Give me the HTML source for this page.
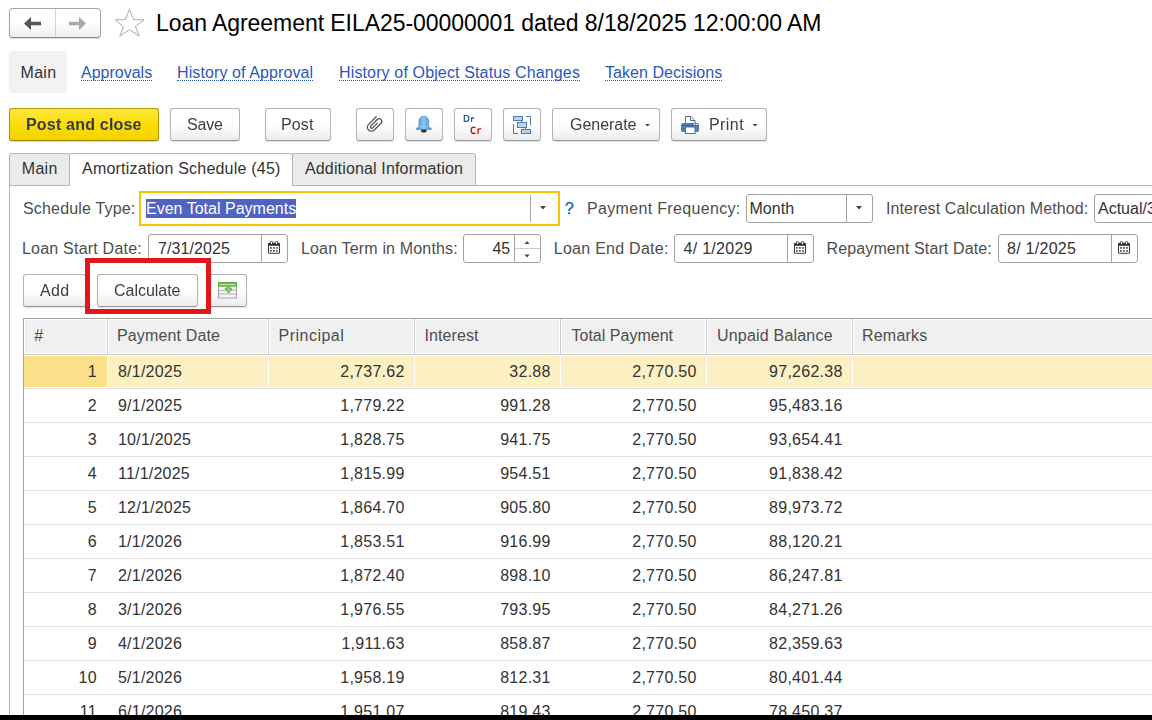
<!DOCTYPE html><html><head><meta charset="utf-8"><style>
*{box-sizing:border-box}
html,body{margin:0;padding:0;width:1152px;height:720px;overflow:hidden;background:#fff;position:relative;font-family:"Liberation Sans",sans-serif;color:#333}
.a{position:absolute}
.t16{position:absolute;font-size:16px;line-height:17px;white-space:nowrap}
.btn{position:absolute;height:33px;border:1px solid #b3b3b3;border-bottom-color:#999;border-radius:3px;background:linear-gradient(#fff 50%,#ececec);box-shadow:0 1px 1px rgba(0,0,0,.12)}
.btn .t16{color:#444}
.lnk{position:absolute;font-size:16px;line-height:17px;white-space:nowrap;color:#2a58bd;border-bottom:1px dotted #2a58bd}
.inp{position:absolute;height:29px;border:1px solid #a3a3a3;border-radius:3px;background:#fff}
.lbl{position:absolute;font-size:16px;line-height:17px;white-space:nowrap;color:#4d4d4d}
</style></head><body>
<div class="a" style="left:9px;top:8px;width:92px;height:30px;border:1px solid #a6a6a6;border-bottom-color:#8c8c8c;border-radius:4px;background:linear-gradient(#fff 40%,#f0f0f0);box-shadow:0 1px 1px rgba(0,0,0,.15)"></div>
<div class="a" style="left:55px;top:9px;width:1px;height:28px;background:#d4d4d4"></div>
<svg class="a" style="left:0;top:0" width="110" height="45"><path d="M24 23.5 L31 17 V21.8 H41 V25.2 H31 V30 Z" fill="#555"/><path d="M86 23.5 L79 17 V21.8 H69 V25.2 H79 V30 Z" fill="#a8a8a8"/></svg>
<svg class="a" style="left:0;top:0" width="160" height="45"><path d="M129.4 9.4 L133.7 19.6 L143.9 19.9 L135.4 26.5 L139.3 36.1 L129.4 29.7 L119.8 36.1 L123.5 26.5 L115.1 19.9 L125.2 19.6 Z" fill="none" stroke="#a3acb7" stroke-width="1" stroke-linejoin="miter"/></svg>
<div class="t16" style="left:156.00px;top:10px;letter-spacing:-0.058px;color:#000;font-size:23px;line-height:26px">Loan Agreement EILA25-00000001 dated 8/18/2025 12:00:00 AM</div>
<div class="a" style="left:9px;top:51px;width:58px;height:42px;background:#f2f2f2;border-radius:4px"></div>
<div class="t16" style="left:20.50px;top:64px;letter-spacing:0.300px;color:#333;">Main</div>
<div class="lnk" style="left:81px;top:64px;height:17px;letter-spacing:0px">Approvals</div>
<div class="lnk" style="left:177px;top:64px;height:17px;letter-spacing:0.1px">History of Approval</div>
<div class="lnk" style="left:339px;top:64px;height:17px;letter-spacing:0.14px">History of Object Status Changes</div>
<div class="lnk" style="left:605px;top:64px;height:17px;letter-spacing:0.05px">Taken Decisions</div>
<div class="a" style="left:9px;top:108px;width:150px;height:33px;border:1px solid #b09a00;border-bottom-color:#9c8600;border-radius:3px;background:linear-gradient(#ffe640,#fbdc00 55%,#f2d300);box-shadow:0 1px 1px rgba(0,0,0,.15)"></div>
<div class="t16" style="left:26.00px;top:116px;letter-spacing:0.200px;color:#353a4c;font-weight:bold;will-change:transform">Post and close</div>
<div class="btn" style="left:170px;top:108px;width:70px"></div>
<div class="t16" style="left:187.00px;top:116px;letter-spacing:-0.200px;color:#3d3d3d;will-change:transform">Save</div>
<div class="btn" style="left:265px;top:108px;width:66px"></div>
<div class="t16" style="left:281.00px;top:116px;letter-spacing:0.133px;color:#3d3d3d;will-change:transform">Post</div>
<div class="btn" style="left:356px;top:108px;width:38px"></div>
<div class="btn" style="left:405px;top:108px;width:38px"></div>
<div class="btn" style="left:454px;top:108px;width:38px"></div>
<div class="btn" style="left:503px;top:108px;width:38px"></div>
<svg class="a" style="left:356px;top:108px" width="38" height="33"><g transform="matrix(0.7071,-0.7071,0.7071,0.7071,8,5)"><path d="M6.6 11.3 L-4.8 11.3 A4 4 0 0 0 -4.8 19.3 L4.7 19.3 A2.65 2.65 0 0 0 4.7 14 L-4.4 14 A1.3 1.3 0 0 0 -4.4 16.6 L2.6 16.6" fill="none" stroke="#555" stroke-width="1.3"/></g></svg>
<svg class="a" style="left:405px;top:108px" width="38" height="33"><defs><linearGradient id="bg" x1="0" x2="1"><stop offset="0" stop-color="#3f8fd0"/><stop offset=".5" stop-color="#86c8f4"/><stop offset="1" stop-color="#3f8fd0"/></linearGradient></defs><ellipse cx="18.8" cy="22.2" rx="2.8" ry="2.3" fill="#2e2e2e"/><path d="M13.9 18 V13 A4.9 4.9 0 0 1 23.7 13 V18 Q23.9 19.6 26.4 20.4 V21.5 H11.2 V20.4 Q13.7 19.6 13.9 18 Z" fill="url(#bg)" stroke="#3d7fb8" stroke-width=".5"/><rect x="13.6" y="17.8" width="10.4" height="1" fill="#9ad2f6" opacity=".7"/></svg>
<svg class="a" style="left:454px;top:108px" width="38" height="33"><g fill="none" stroke="#1f5b9a" stroke-width="1.2"><path d="M10.3 7.5 V13.3 H12 C14.2 13.3 14.9 11.8 14.9 10.4 C14.9 9 14.2 7.5 12 7.5 Z"/><path d="M17.6 9.3 V13.9 M17.6 10.9 C17.8 10.1 18.6 9.8 20.1 9.9"/></g><g fill="none" stroke="#c81400" stroke-width="1.3"><path d="M21.4 19.9 C20.9 19.2 20.3 19.2 19.6 19.2 C17.8 19.2 17.2 20.8 17.2 22.4 C17.2 24 17.8 25.5 19.6 25.5 C20.3 25.5 20.9 25.3 21.4 24.8"/><path d="M24.1 20.6 V26.1 M24.1 21.8 C24.3 20.9 25.3 20.5 27 20.6"/></g></svg>
<svg class="a" style="left:503px;top:108px" width="38" height="33"><g stroke="#4a7fb0" stroke-width="1" fill="#bcd4ea"><rect x="10.5" y="8.5" width="9" height="4"/><rect x="14.5" y="14.5" width="9" height="5"/><rect x="18.5" y="21.5" width="9" height="4"/></g><g stroke="#4a7fb0" stroke-width="1" fill="none"><path d="M18.5 12.5 V14.5 M22.5 19.5 V21.5 M23 8.5 H27.5 V17.5 M10.5 16 V25.5 H15"/></g></svg>
<div class="btn" style="left:552px;top:108px;width:108px"></div>
<div class="t16" style="left:569.50px;top:116px;letter-spacing:-0.029px;color:#3d3d3d;will-change:transform">Generate</div>
<svg class="a" style="left:640px;top:120px" width="14" height="10"><path d="M5 4 H10 L7.5 6.5 Z" fill="#444"/></svg>
<div class="btn" style="left:671px;top:108px;width:96px"></div>
<div class="t16" style="left:709.00px;top:116px;letter-spacing:0.425px;color:#3d3d3d;will-change:transform">Print</div>
<svg class="a" style="left:747px;top:120px" width="14" height="10"><path d="M5.5 4 H10.5 L8 6.5 Z" fill="#444"/></svg>
<svg class="a" style="left:671px;top:108px" width="38" height="33"><path d="M14.5 15.5 V8.5 H20 L24 12.5 V15.5" fill="#fff" stroke="#4f6f95" stroke-width="1"/><path d="M19.5 8.5 V12.5 H24" fill="#e8eef5" stroke="#4f6f95" stroke-width="1"/><rect x="10" y="15" width="18" height="9" rx="2" fill="#557ead"/><rect x="11" y="17" width="16" height="1" fill="#3f628c"/><circle cx="23.5" cy="16.5" r=".8" fill="#fff"/><circle cx="25.6" cy="16.5" r=".8" fill="#fff"/><rect x="14.5" y="19" width="9.5" height="6.5" fill="#fff" stroke="#4f6f95" stroke-width="1"/></svg>
<div class="a" style="left:9px;top:185px;width:1143px;height:1px;background:#b5b5b5"></div>
<div class="a" style="left:9px;top:153px;width:61px;height:33px;border:1px solid #b5b5b5;border-radius:3px 3px 0 0;background:#ebebeb"></div>
<div class="t16" style="left:21.80px;top:160px;letter-spacing:0.300px;color:#333;">Main</div>
<div class="a" style="left:69px;top:153px;width:224px;height:33px;border:1px solid #b5b5b5;border-bottom:none;border-radius:3px 3px 0 0;background:#fff"></div>
<div class="t16" style="left:82.00px;top:160px;letter-spacing:0.216px;color:#333;">Amortization Schedule (45)</div>
<div class="a" style="left:292px;top:153px;width:184px;height:33px;border:1px solid #b5b5b5;border-radius:3px 3px 0 0;background:#ebebeb"></div>
<div class="t16" style="left:305.00px;top:160px;letter-spacing:0.148px;color:#333;">Additional Information</div>
<div class="a" style="left:9px;top:185px;width:1px;height:535px;background:#b5b5b5"></div>
<div class="t16" style="left:23.00px;top:200px;letter-spacing:0.177px;color:#4d4d4d;">Schedule Type:</div>
<div class="a" style="left:139px;top:191px;width:421px;height:35px;border:2px solid #f7c600;background:#fff"></div>
<div class="a" style="left:146px;top:199px;width:150px;height:19px;background:#5063c2"></div>
<div class="t16" style="left:146.00px;top:200px;letter-spacing:0.011px;color:#fff;">Even Total Payments</div>
<div class="a" style="left:530px;top:195px;width:1px;height:27px;background:#a8a8a8"></div>
<svg class="a" style="left:530px;top:195px" width="28" height="28"><path d="M10 11 H16 L13 14.5 Z" fill="#444"/></svg>
<div class="t16" style="left:564.60px;top:200px;letter-spacing:0.000px;color:#1a6fc2;-webkit-text-stroke:0.45px #1a6fc2;will-change:transform">?</div>
<div class="t16" style="left:587.00px;top:200px;letter-spacing:0.335px;color:#4d4d4d;">Payment Frequency:</div>
<div class="inp" style="left:746px;top:194px;width:127px;height:29px"></div>
<div class="t16" style="left:749.50px;top:200px;letter-spacing:0.025px;color:#333;">Month</div>
<div class="a" style="left:846px;top:195px;width:1px;height:27px;background:#a3a3a3"></div>
<svg class="a" style="left:847px;top:195px" width="25" height="27"><path d="M9 11 H15 L12 14.5 Z" fill="#444"/></svg>
<div class="t16" style="left:886.00px;top:200px;letter-spacing:0.111px;color:#4d4d4d;">Interest Calculation Method:</div>
<div class="inp" style="left:1094px;top:194px;width:80px;height:29px"></div>
<div class="t16" style="left:1098px;top:200px;color:#333">Actual/365</div>
<div class="t16" style="left:22.00px;top:240px;letter-spacing:0.213px;color:#4d4d4d;">Loan Start Date:</div>
<div class="inp" style="left:148px;top:234px;width:140px;height:29px"></div><div class="t16" style="left:158.00px;top:240px;letter-spacing:0.075px;color:#333;">7/31/2025</div><div class="a" style="left:261px;top:235px;width:1px;height:27px;background:#a3a3a3"></div><svg class="a" style="left:261px;top:234px" width="27" height="29"><rect x="7" y="8.8" width="12" height="11" rx="1.4" fill="#333"/><rect x="8" y="11.8" width="10" height="7" fill="#fff"/><g fill="#333"><rect x="9.1" y="13.1" width="1.6" height="1.6"/><rect x="12.1" y="13.1" width="1.6" height="1.6"/><rect x="15.2" y="13.1" width="1.6" height="1.6"/><rect x="9.1" y="16.1" width="1.6" height="1.6"/><rect x="12.1" y="16.1" width="1.6" height="1.6"/><rect x="15.2" y="16.1" width="1.6" height="1.6"/></g><g fill="#333"><rect x="9.2" y="6.9" width="2.6" height="4" rx="1.3"/><rect x="14.2" y="6.9" width="2.6" height="4" rx="1.3"/></g><g fill="#fff"><rect x="9.9" y="7.6" width="1.2" height="2.6" rx=".6"/><rect x="14.9" y="7.6" width="1.2" height="2.6" rx=".6"/></g></svg>
<div class="t16" style="left:301.00px;top:240px;letter-spacing:0.163px;color:#4d4d4d;">Loan Term in Months:</div>
<div class="inp" style="left:463px;top:234px;width:78px;height:29px"></div>
<div class="t16" style="left:492.50px;top:240px;letter-spacing:-0.200px;color:#333;">45</div>
<div class="a" style="left:514px;top:235px;width:1px;height:27px;background:#a3a3a3"></div>
<div class="a" style="left:515px;top:248px;width:25px;height:1px;background:#c8c8c8"></div>
<svg class="a" style="left:515px;top:234px" width="25" height="29"><path d="M9.5 10 H14.5 L12 7 Z M9.5 20.5 H14.5 L12 23.5 Z" fill="#444"/></svg>
<div class="t16" style="left:553.80px;top:240px;letter-spacing:0.262px;color:#4d4d4d;">Loan End Date:</div>
<div class="inp" style="left:674px;top:234px;width:140px;height:29px"></div><div class="t16" style="left:683.50px;top:240px;letter-spacing:0.281px;color:#333;">4/ 1/2029</div><div class="a" style="left:787px;top:235px;width:1px;height:27px;background:#a3a3a3"></div><svg class="a" style="left:787px;top:234px" width="27" height="29"><rect x="7" y="8.8" width="12" height="11" rx="1.4" fill="#333"/><rect x="8" y="11.8" width="10" height="7" fill="#fff"/><g fill="#333"><rect x="9.1" y="13.1" width="1.6" height="1.6"/><rect x="12.1" y="13.1" width="1.6" height="1.6"/><rect x="15.2" y="13.1" width="1.6" height="1.6"/><rect x="9.1" y="16.1" width="1.6" height="1.6"/><rect x="12.1" y="16.1" width="1.6" height="1.6"/><rect x="15.2" y="16.1" width="1.6" height="1.6"/></g><g fill="#333"><rect x="9.2" y="6.9" width="2.6" height="4" rx="1.3"/><rect x="14.2" y="6.9" width="2.6" height="4" rx="1.3"/></g><g fill="#fff"><rect x="9.9" y="7.6" width="1.2" height="2.6" rx=".6"/><rect x="14.9" y="7.6" width="1.2" height="2.6" rx=".6"/></g></svg>
<div class="t16" style="left:826.50px;top:240px;letter-spacing:0.125px;color:#4d4d4d;">Repayment Start Date:</div>
<div class="inp" style="left:998px;top:234px;width:140px;height:29px"></div><div class="t16" style="left:1007.00px;top:240px;letter-spacing:0.275px;color:#333;">8/ 1/2025</div><div class="a" style="left:1111px;top:235px;width:1px;height:27px;background:#a3a3a3"></div><svg class="a" style="left:1111px;top:234px" width="27" height="29"><rect x="7" y="8.8" width="12" height="11" rx="1.4" fill="#333"/><rect x="8" y="11.8" width="10" height="7" fill="#fff"/><g fill="#333"><rect x="9.1" y="13.1" width="1.6" height="1.6"/><rect x="12.1" y="13.1" width="1.6" height="1.6"/><rect x="15.2" y="13.1" width="1.6" height="1.6"/><rect x="9.1" y="16.1" width="1.6" height="1.6"/><rect x="12.1" y="16.1" width="1.6" height="1.6"/><rect x="15.2" y="16.1" width="1.6" height="1.6"/></g><g fill="#333"><rect x="9.2" y="6.9" width="2.6" height="4" rx="1.3"/><rect x="14.2" y="6.9" width="2.6" height="4" rx="1.3"/></g><g fill="#fff"><rect x="9.9" y="7.6" width="1.2" height="2.6" rx=".6"/><rect x="14.9" y="7.6" width="1.2" height="2.6" rx=".6"/></g></svg>
<div class="btn" style="left:23px;top:274px;width:63px"></div>
<div class="t16" style="left:40.00px;top:282px;letter-spacing:0.300px;color:#3d3d3d;will-change:transform">Add</div>
<div class="btn" style="left:97px;top:274px;width:101px"></div>
<div class="t16" style="left:114.00px;top:282px;letter-spacing:-0.025px;color:#3d3d3d;will-change:transform">Calculate</div>
<div class="btn" style="left:209px;top:274px;width:38px"></div>
<svg class="a" style="left:209px;top:274px" width="38" height="33"><rect x="9.5" y="8.5" width="18" height="15.5" fill="#f4f4f4" stroke="#a3a3a3" stroke-width="1"/><path d="M10 16.3 H27 M10 20 H27" stroke="#b0b0b0" stroke-width="1"/><rect x="9" y="8" width="19" height="4.7" fill="#62a847"/><rect x="10.3" y="9.7" width="16.4" height="1.6" fill="#b3e59d"/><path d="M17.6 12.5 H21.4 V14.3 H23.7 L19.5 19.6 L15.3 14.3 H17.6 Z" fill="#62a847"/><path d="M18.8 12.5 H20.2 V15.2 H21.5 L19.5 17.7 L17.5 15.2 H18.8 Z" fill="#9fd68a"/></svg>
<div class="a" style="left:23px;top:318px;width:1140px;height:402px;border-left:1px solid #a3a3a3;border-top:1px solid #a3a3a3"></div>
<div class="a" style="left:24px;top:354px;width:1130px;height:1px;background:#cdcdcd"></div>
<div class="a" style="left:25px;top:320px;width:81px;height:33px;background:#f0f0f0"></div>
<div class="a" style="left:109px;top:320px;width:158px;height:33px;background:#f0f0f0"></div>
<div class="a" style="left:270px;top:320px;width:143px;height:33px;background:#f0f0f0"></div>
<div class="a" style="left:416px;top:320px;width:143px;height:33px;background:#f0f0f0"></div>
<div class="a" style="left:562px;top:320px;width:143px;height:33px;background:#f0f0f0"></div>
<div class="a" style="left:708px;top:320px;width:143px;height:33px;background:#f0f0f0"></div>
<div class="a" style="left:854px;top:320px;width:305px;height:33px;background:#f0f0f0"></div>
<div class="a" style="left:107px;top:319px;width:1px;height:36px;background:#cdcdcd"></div>
<div class="a" style="left:268px;top:319px;width:1px;height:36px;background:#cdcdcd"></div>
<div class="a" style="left:414px;top:319px;width:1px;height:36px;background:#cdcdcd"></div>
<div class="a" style="left:560px;top:319px;width:1px;height:36px;background:#cdcdcd"></div>
<div class="a" style="left:706px;top:319px;width:1px;height:36px;background:#cdcdcd"></div>
<div class="a" style="left:852px;top:319px;width:1px;height:36px;background:#cdcdcd"></div>
<div class="t16" style="left:34.20px;top:327px;letter-spacing:0.000px;color:#4d4d4d;">#</div>
<div class="t16" style="left:117.00px;top:327px;letter-spacing:0.145px;color:#4d4d4d;">Payment Date</div>
<div class="t16" style="left:278.50px;top:327px;letter-spacing:0.488px;color:#4d4d4d;">Principal</div>
<div class="t16" style="left:424.50px;top:327px;letter-spacing:0.079px;color:#4d4d4d;">Interest</div>
<div class="t16" style="left:571.50px;top:327px;letter-spacing:0.008px;color:#4d4d4d;">Total Payment</div>
<div class="t16" style="left:717.00px;top:327px;letter-spacing:0.200px;color:#4d4d4d;">Unpaid Balance</div>
<div class="t16" style="left:862.00px;top:327px;letter-spacing:0.200px;color:#4d4d4d;">Remarks</div>
<div class="a" style="left:24px;top:356px;width:83px;height:31px;background:#fbe08a"></div>
<div class="a" style="left:108px;top:356px;width:1050px;height:31px;background:#fdf1c4"></div>
<div class="a" style="left:268px;top:356px;width:1px;height:31px;background:#fff"></div>
<div class="a" style="left:414px;top:356px;width:1px;height:31px;background:#fff"></div>
<div class="a" style="left:560px;top:356px;width:1px;height:31px;background:#fff"></div>
<div class="a" style="left:706px;top:356px;width:1px;height:31px;background:#fff"></div>
<div class="a" style="left:852px;top:356px;width:1px;height:31px;background:#fff"></div>
<div class="a" style="left:24px;top:388px;width:1130px;height:1px;background:#e3e3e3"></div>
<div class="t16" style="left:24px;top:363px;width:72.7px;text-align:right;letter-spacing:0.15px">1</div>
<div class="t16" style="left:118px;top:363px;letter-spacing:0.22px">8/1/2025</div>
<div class="t16" style="left:268px;top:363px;width:136.7px;text-align:right;letter-spacing:0.27px">2,737.62</div>
<div class="t16" style="left:414px;top:363px;width:136.7px;text-align:right;letter-spacing:0.27px">32.88</div>
<div class="t16" style="left:560px;top:363px;width:136.7px;text-align:right;letter-spacing:0.27px">2,770.50</div>
<div class="t16" style="left:706px;top:363px;width:136.7px;text-align:right;letter-spacing:0.27px">97,262.38</div>
<div class="a" style="left:24px;top:422px;width:1130px;height:1px;background:#e3e3e3"></div>
<div class="t16" style="left:24px;top:397px;width:72.7px;text-align:right;letter-spacing:0.15px">2</div>
<div class="t16" style="left:118px;top:397px;letter-spacing:0.22px">9/1/2025</div>
<div class="t16" style="left:268px;top:397px;width:136.7px;text-align:right;letter-spacing:0.27px">1,779.22</div>
<div class="t16" style="left:414px;top:397px;width:136.7px;text-align:right;letter-spacing:0.27px">991.28</div>
<div class="t16" style="left:560px;top:397px;width:136.7px;text-align:right;letter-spacing:0.27px">2,770.50</div>
<div class="t16" style="left:706px;top:397px;width:136.7px;text-align:right;letter-spacing:0.27px">95,483.16</div>
<div class="a" style="left:24px;top:456px;width:1130px;height:1px;background:#e3e3e3"></div>
<div class="t16" style="left:24px;top:431px;width:72.7px;text-align:right;letter-spacing:0.15px">3</div>
<div class="t16" style="left:118px;top:431px;letter-spacing:0.22px">10/1/2025</div>
<div class="t16" style="left:268px;top:431px;width:136.7px;text-align:right;letter-spacing:0.27px">1,828.75</div>
<div class="t16" style="left:414px;top:431px;width:136.7px;text-align:right;letter-spacing:0.27px">941.75</div>
<div class="t16" style="left:560px;top:431px;width:136.7px;text-align:right;letter-spacing:0.27px">2,770.50</div>
<div class="t16" style="left:706px;top:431px;width:136.7px;text-align:right;letter-spacing:0.27px">93,654.41</div>
<div class="a" style="left:24px;top:490px;width:1130px;height:1px;background:#e3e3e3"></div>
<div class="t16" style="left:24px;top:465px;width:72.7px;text-align:right;letter-spacing:0.15px">4</div>
<div class="t16" style="left:118px;top:465px;letter-spacing:0.22px">11/1/2025</div>
<div class="t16" style="left:268px;top:465px;width:136.7px;text-align:right;letter-spacing:0.27px">1,815.99</div>
<div class="t16" style="left:414px;top:465px;width:136.7px;text-align:right;letter-spacing:0.27px">954.51</div>
<div class="t16" style="left:560px;top:465px;width:136.7px;text-align:right;letter-spacing:0.27px">2,770.50</div>
<div class="t16" style="left:706px;top:465px;width:136.7px;text-align:right;letter-spacing:0.27px">91,838.42</div>
<div class="a" style="left:24px;top:524px;width:1130px;height:1px;background:#e3e3e3"></div>
<div class="t16" style="left:24px;top:499px;width:72.7px;text-align:right;letter-spacing:0.15px">5</div>
<div class="t16" style="left:118px;top:499px;letter-spacing:0.22px">12/1/2025</div>
<div class="t16" style="left:268px;top:499px;width:136.7px;text-align:right;letter-spacing:0.27px">1,864.70</div>
<div class="t16" style="left:414px;top:499px;width:136.7px;text-align:right;letter-spacing:0.27px">905.80</div>
<div class="t16" style="left:560px;top:499px;width:136.7px;text-align:right;letter-spacing:0.27px">2,770.50</div>
<div class="t16" style="left:706px;top:499px;width:136.7px;text-align:right;letter-spacing:0.27px">89,973.72</div>
<div class="a" style="left:24px;top:558px;width:1130px;height:1px;background:#e3e3e3"></div>
<div class="t16" style="left:24px;top:533px;width:72.7px;text-align:right;letter-spacing:0.15px">6</div>
<div class="t16" style="left:118px;top:533px;letter-spacing:0.22px">1/1/2026</div>
<div class="t16" style="left:268px;top:533px;width:136.7px;text-align:right;letter-spacing:0.27px">1,853.51</div>
<div class="t16" style="left:414px;top:533px;width:136.7px;text-align:right;letter-spacing:0.27px">916.99</div>
<div class="t16" style="left:560px;top:533px;width:136.7px;text-align:right;letter-spacing:0.27px">2,770.50</div>
<div class="t16" style="left:706px;top:533px;width:136.7px;text-align:right;letter-spacing:0.27px">88,120.21</div>
<div class="a" style="left:24px;top:592px;width:1130px;height:1px;background:#e3e3e3"></div>
<div class="t16" style="left:24px;top:567px;width:72.7px;text-align:right;letter-spacing:0.15px">7</div>
<div class="t16" style="left:118px;top:567px;letter-spacing:0.22px">2/1/2026</div>
<div class="t16" style="left:268px;top:567px;width:136.7px;text-align:right;letter-spacing:0.27px">1,872.40</div>
<div class="t16" style="left:414px;top:567px;width:136.7px;text-align:right;letter-spacing:0.27px">898.10</div>
<div class="t16" style="left:560px;top:567px;width:136.7px;text-align:right;letter-spacing:0.27px">2,770.50</div>
<div class="t16" style="left:706px;top:567px;width:136.7px;text-align:right;letter-spacing:0.27px">86,247.81</div>
<div class="a" style="left:24px;top:626px;width:1130px;height:1px;background:#e3e3e3"></div>
<div class="t16" style="left:24px;top:601px;width:72.7px;text-align:right;letter-spacing:0.15px">8</div>
<div class="t16" style="left:118px;top:601px;letter-spacing:0.22px">3/1/2026</div>
<div class="t16" style="left:268px;top:601px;width:136.7px;text-align:right;letter-spacing:0.27px">1,976.55</div>
<div class="t16" style="left:414px;top:601px;width:136.7px;text-align:right;letter-spacing:0.27px">793.95</div>
<div class="t16" style="left:560px;top:601px;width:136.7px;text-align:right;letter-spacing:0.27px">2,770.50</div>
<div class="t16" style="left:706px;top:601px;width:136.7px;text-align:right;letter-spacing:0.27px">84,271.26</div>
<div class="a" style="left:24px;top:660px;width:1130px;height:1px;background:#e3e3e3"></div>
<div class="t16" style="left:24px;top:635px;width:72.7px;text-align:right;letter-spacing:0.15px">9</div>
<div class="t16" style="left:118px;top:635px;letter-spacing:0.22px">4/1/2026</div>
<div class="t16" style="left:268px;top:635px;width:136.7px;text-align:right;letter-spacing:0.27px">1,911.63</div>
<div class="t16" style="left:414px;top:635px;width:136.7px;text-align:right;letter-spacing:0.27px">858.87</div>
<div class="t16" style="left:560px;top:635px;width:136.7px;text-align:right;letter-spacing:0.27px">2,770.50</div>
<div class="t16" style="left:706px;top:635px;width:136.7px;text-align:right;letter-spacing:0.27px">82,359.63</div>
<div class="a" style="left:24px;top:694px;width:1130px;height:1px;background:#e3e3e3"></div>
<div class="t16" style="left:24px;top:669px;width:72.7px;text-align:right;letter-spacing:0.15px">10</div>
<div class="t16" style="left:118px;top:669px;letter-spacing:0.22px">5/1/2026</div>
<div class="t16" style="left:268px;top:669px;width:136.7px;text-align:right;letter-spacing:0.27px">1,958.19</div>
<div class="t16" style="left:414px;top:669px;width:136.7px;text-align:right;letter-spacing:0.27px">812.31</div>
<div class="t16" style="left:560px;top:669px;width:136.7px;text-align:right;letter-spacing:0.27px">2,770.50</div>
<div class="t16" style="left:706px;top:669px;width:136.7px;text-align:right;letter-spacing:0.27px">80,401.44</div>
<div class="a" style="left:24px;top:728px;width:1130px;height:1px;background:#e3e3e3"></div>
<div class="t16" style="left:24px;top:703px;width:72.7px;text-align:right;letter-spacing:0.15px">11</div>
<div class="t16" style="left:118px;top:703px;letter-spacing:0.22px">6/1/2026</div>
<div class="t16" style="left:268px;top:703px;width:136.7px;text-align:right;letter-spacing:0.27px">1,951.07</div>
<div class="t16" style="left:414px;top:703px;width:136.7px;text-align:right;letter-spacing:0.27px">819.43</div>
<div class="t16" style="left:560px;top:703px;width:136.7px;text-align:right;letter-spacing:0.27px">2,770.50</div>
<div class="t16" style="left:706px;top:703px;width:136.7px;text-align:right;letter-spacing:0.27px">78,450.37</div>
<div class="a" style="left:85px;top:258px;width:126px;height:56px;border:5px solid #e0161b"></div>
<div class="a" style="left:0;top:715px;width:1152px;height:5px;background:#000"></div>
</body></html>
